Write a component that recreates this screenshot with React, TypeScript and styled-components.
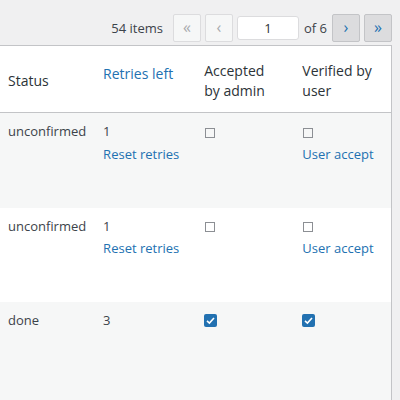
import React from "react";
import styled, { createGlobalStyle } from "styled-components";

const Global = createGlobalStyle`
  html, body { margin: 0; padding: 0; }
  body {
    background: #f0f0f1;
    font-family: "Open Sans", "Noto Sans", sans-serif;
    color: #3c434a;
    font-size: 13px;
    width: 400px;
    height: 400px;
    overflow: hidden;
  }
`;

const Page = styled.div`
  padding-right: 8px;
  display: flex;
  flex-direction: column;
`;

const TableNav = styled.div`
  display: flex;
  justify-content: flex-end;
  align-items: flex-start;
  height: 42px;
  padding-top: 14px;
  box-sizing: border-box;
  margin-bottom: 3px;
`;

const Count = styled.span`
  font-size: 13px;
  line-height: 28px;
  margin-right: 10px;
  color: #3c434a;
`;

const PageButton = styled.span<{ $disabled?: boolean; $first?: boolean }>`
  display: inline-flex;
  align-items: center;
  justify-content: center;
  box-sizing: border-box;
  width: 28px;
  height: 28px;
  margin-left: ${(p) => (p.$first ? "0" : "4px")};
  border: 1px solid ${(p) => (p.$disabled ? "#dcdcde" : "#c3c4c7")};
  background: ${(p) => (p.$disabled ? "#f6f7f7" : "#dcdcde")};
  color: ${(p) => (p.$disabled ? "#a7aaad" : "#2271b1")};
  border-radius: 2px;
  font-size: 16px;
  line-height: 1;
  padding-bottom: 2px;
`;

const PageInput = styled.span`
  display: inline-flex;
  align-items: center;
  justify-content: center;
  box-sizing: border-box;
  width: 62px;
  height: 24px;
  margin: 2px 0 0 4px;
  background: #fff;
  border: 1px solid #dcdcde;
  border-radius: 3px;
  color: #2c3338;
  font-size: 13px;
`;

const OfText = styled.span`
  line-height: 28px;
  margin: 0 5px 0 5px;
  font-size: 13px;
`;

const Table = styled.table`
  width: 392px;
  border-collapse: collapse;
  table-layout: fixed;
  background: #fff;
  border-top: 1px solid #c3c4c7;
  border-right: 1px solid #c3c4c7;
`;

const Th = styled.th<{ $w: number }>`
  width: ${(p) => p.$w}px;
  text-align: left;
  font-weight: 400;
  font-size: 14px;
  line-height: 19.5px;
  color: #2c3338;
  padding: 3px 12px 0 8px;
  height: 67px;
  vertical-align: middle;
  box-sizing: border-box;
  border-bottom: 1px solid #c3c4c7;
`;

const SortLink = styled.a`
  display: block;
  color: #2271b1;
  text-decoration: none;
  margin-bottom: 14px;
`;

const Tr = styled.tr<{ $alt?: boolean }>`
  background: ${(p) => (p.$alt ? "#f6f7f7" : "#fff")};
`;

const Td = styled.td<{ $h: number }>`
  height: ${(p) => p.$h}px;
  vertical-align: top;
  padding: 9px 8px 0;
  box-sizing: border-box;
  line-height: 19.5px;
  font-size: 13px;
  color: #3c434a;
`;

const RowLink = styled.a`
  display: block;
  margin-top: 3px;
  color: #2271b1;
  text-decoration: none;
`;

const Line = styled.div`
  height: 19.5px;
  display: flex;
  align-items: center;
`;

const EmptyBox = styled.span`
  display: inline-block;
  width: 10px;
  height: 10px;
  box-sizing: border-box;
  border: 1px solid #8c8f94;
  margin: 2px 0 0 1px;
`;

const CheckedBox = styled.span`
  display: inline-flex;
  align-items: center;
  justify-content: center;
  width: 13px;
  height: 13px;
  background: #2271b1;
  border-radius: 2px;
`;

const Check = () => (
  <CheckedBox>
    <svg width="11" height="11" viewBox="0 0 11 11">
      <path d="M2 5.8 L4.4 8 L9 3" fill="none" stroke="#fff" strokeWidth="1.6" />
    </svg>
  </CheckedBox>
);

type Row = { status: string; retries: string; reset: boolean; admin: boolean; user: boolean; h: number; alt: boolean };

const rows: Row[] = [
  { status: "unconfirmed", retries: "1", reset: true, admin: false, user: false, h: 95, alt: true },
  { status: "unconfirmed", retries: "1", reset: true, admin: false, user: false, h: 94, alt: false },
  { status: "done", retries: "3", reset: false, admin: true, user: true, h: 99, alt: true },
];

export default function App() {
  return (
    <Page>
      <Global />
      <TableNav>
        <Count>54 items</Count>
        <PageButton $disabled $first>«</PageButton>
        <PageButton $disabled>‹</PageButton>
        <PageInput>1</PageInput>
        <OfText>of 6</OfText>
        <PageButton $first>›</PageButton>
        <PageButton>»</PageButton>
      </TableNav>
      <Table>
        <thead>
          <tr>
            <Th $w={95}>Status</Th>
            <Th $w={101}>
              <SortLink href="#">Retries left</SortLink>
            </Th>
            <Th $w={98}>Accepted by admin</Th>
            <Th $w={97}>Verified by user</Th>
          </tr>
        </thead>
        <tbody>
          {rows.map((r, i) => (
            <Tr key={i} $alt={r.alt}>
              <Td $h={r.h}>{r.status}</Td>
              <Td $h={r.h}>
                {r.retries}
                {r.reset && <RowLink href="#">Reset retries</RowLink>}
              </Td>
              <Td $h={r.h}>
                <Line>{r.admin ? <Check /> : <EmptyBox />}</Line>
              </Td>
              <Td $h={r.h}>
                <Line>{r.user ? <Check /> : <EmptyBox />}</Line>
                {!r.user && <RowLink href="#">User accept</RowLink>}
              </Td>
            </Tr>
          ))}
        </tbody>
      </Table>
    </Page>
  );
}
